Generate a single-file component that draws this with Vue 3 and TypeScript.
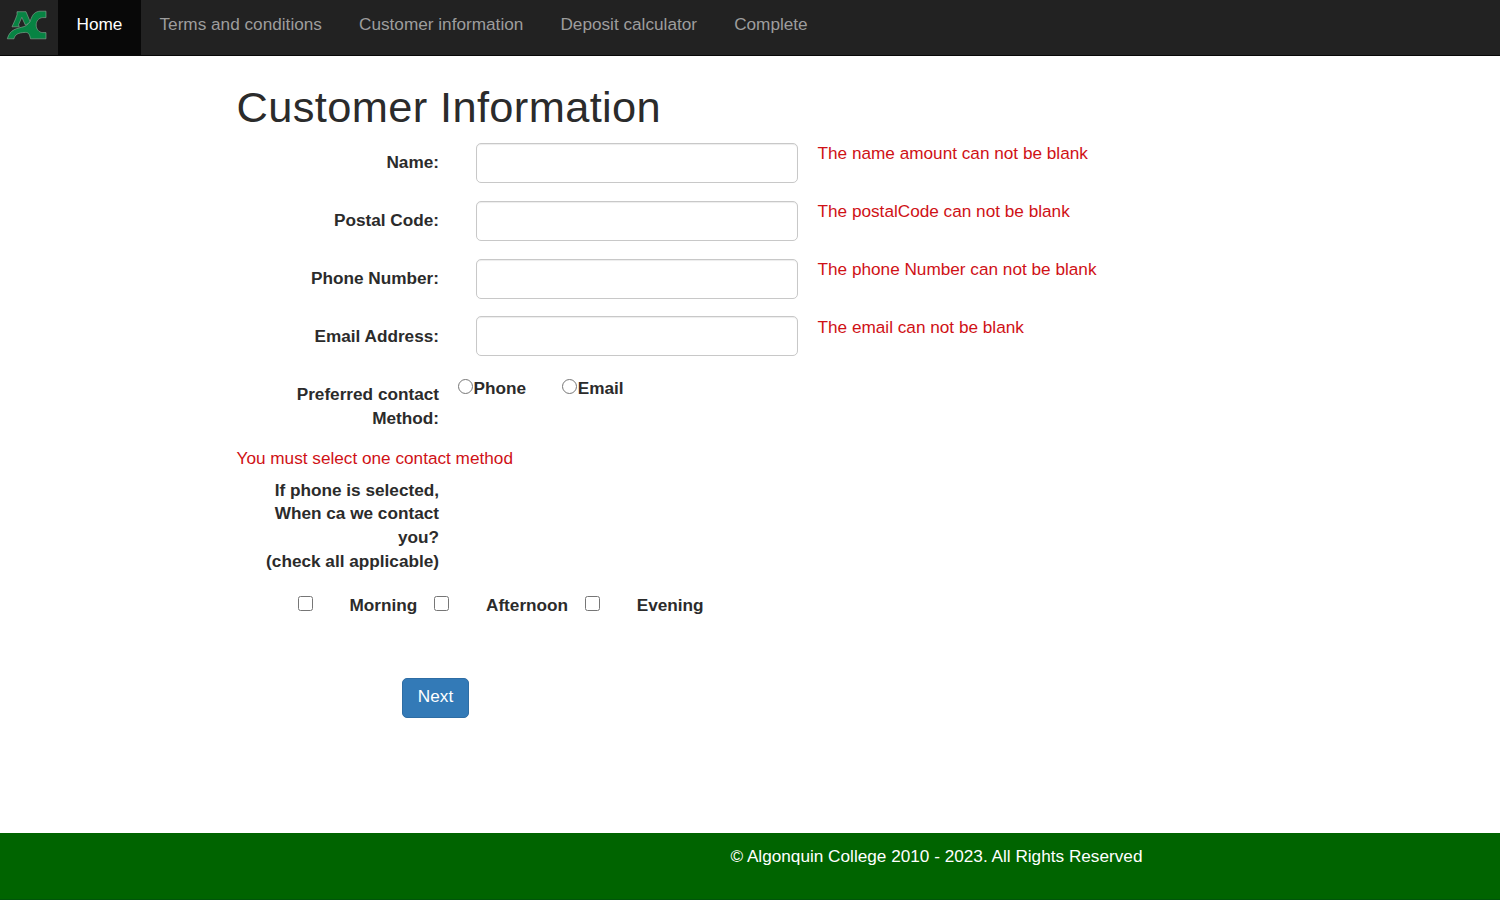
<script setup lang="ts">
import { reactive, ref } from 'vue'

interface Field {
  id: string
  label: string
  error: string
}

const navItems: string[] = ['Home', 'Terms and conditions', 'Customer information', 'Deposit calculator', 'Complete']
const active = ref('Home')

const fields: Field[] = [
  { id: 'name', label: 'Name:', error: 'The name amount can not be blank' },
  { id: 'postalCode', label: 'Postal Code:', error: 'The postalCode can not be blank' },
  { id: 'phoneNumber', label: 'Phone Number:', error: 'The phone Number can not be blank' },
  { id: 'email', label: 'Email Address:', error: 'The email can not be blank' },
]
const values = reactive<Record<string, string>>({ name: '', postalCode: '', phoneNumber: '', email: '' })
const contact = ref('')
const times = ref<string[]>([])
</script>

<template>
  <div class="page">
    <nav class="navbar">
      <a class="brand" href="#">
        <svg width="42" height="32" viewBox="0 0 42 32" aria-label="AC">
          <g fill="#078343" stroke="#8fa898" stroke-width="0.6" stroke-linejoin="round">
            <path d="M40 1.2 H34 C29.5 1.5 26.8 4 25.2 8.5 C23.8 12.5 21.5 15.4 18 16.6 C11 18.6 4 19 1.3 28.8 H8 C9 24.3 12 22.8 19.4 22.4 C22.5 22.4 23.5 24 24.5 28.8 H40 V22.6 H36.8 C32.6 22.4 30.2 19 30.2 15 C30.2 11 32.6 7.8 36.8 7.6 H40 Z" />
            <path d="M6 16.8 L9.5 9 L11 4.8 V1.7 H20 L24 11.3 C22.8 13.3 21.5 14.6 19.3 15 L15.8 7.3 L12.6 14.6 L13.2 16.8 Z" />
          </g>
        </svg>
      </a>
      <a
        v-for="item in navItems"
        :key="item"
        href="#"
        class="nav-link"
        :class="{ active: item === active }"
        @click.prevent="active = item"
      >{{ item }}</a>
    </nav>

    <main class="content">
      <h1>Customer Information</h1>
      <form @submit.prevent>
        <div v-for="field in fields" :key="field.id" class="row">
          <label class="label" :for="field.id">{{ field.label }}</label>
          <input :id="field.id" v-model="values[field.id]" class="control" type="text" />
          <span class="error">{{ field.error }}</span>
        </div>

        <div class="contact-row">
          <span class="label">Preferred contact Method:</span>
          <div class="radios">
            <label class="radio"><input v-model="contact" type="radio" value="phone" />Phone</label>
            <label class="radio"><input v-model="contact" type="radio" value="email" />Email</label>
          </div>
        </div>
        <div class="error contact-error">You must select one contact method</div>

        <div class="label time-label">If phone is selected,<br />When ca we contact<br />you?<br />(check all applicable)</div>
        <div class="times">
          <label v-for="t in ['Morning', 'Afternoon', 'Evening']" :key="t" class="time">
            <input v-model="times" type="checkbox" :value="t" />{{ t }}
          </label>
        </div>
        <button class="next" type="submit">Next</button>
      </form>
    </main>

    <footer class="footer">© Algonquin College 2010 - 2023. All Rights Reserved</footer>
  </div>
</template>

<style>
body {
  margin: 0;
  background: #fff;
}
</style>

<style scoped>
.page {
  display: flex;
  flex-direction: column;
  height: 900px;
  overflow: hidden;
  font-family: "Liberation Sans", Arial, sans-serif;
  font-size: 17.2px;
  line-height: 23.7px;
  color: #2b2b2b;
}
.page * {
  box-sizing: border-box;
}
.navbar {
  display: flex;
  flex: none;
  height: 56px;
  background: #222;
  border-bottom: 1px solid #080808;
}
.brand {
  width: 58px;
  padding: 10px 0 0 6px;
}
.brand svg {
  display: block;
}
.nav-link {
  padding: 12.5px 18.55px 0;
  color: #9d9d9d;
  text-decoration: none;
  white-space: nowrap;
}
.nav-link.active {
  color: #fff;
  background: #080808;
}
.content {
  flex: 1;
  padding: 27px 0 0 236.5px;
}
h1 {
  margin: 0 0 10.8px;
  font-size: 43.4px;
  font-weight: 400;
  line-height: 49px;
  letter-spacing: 0.37px;
  white-space: nowrap;
}
.row {
  display: grid;
  grid-template-columns: 202.5px 322px 1fr;
  height: 57.9px;
}
.label {
  padding-top: 8.1px;
  font-weight: 700;
  text-align: right;
  white-space: nowrap;
}
.control {
  width: 322px;
  height: 40px;
  margin-left: 37px;
  padding: 7px 14px;
  font: inherit;
  color: #555;
  background: #fff;
  border: 1px solid #c8c8c8;
  border-radius: 5px;
  box-shadow: inset 0 1px 1px rgba(0, 0, 0, 0.075);
}
.error {
  color: #cf1116;
  white-space: nowrap;
}
.row .error {
  margin: -0.7px 0 0 56.5px;
}
.contact-row {
  display: flex;
  height: 72.5px;
}
.contact-row .label {
  width: 202.5px;
  padding-top: 8.5px;
  white-space: normal;
}
.radios {
  display: flex;
  gap: 35.7px;
  padding: 2.2px 0 0 18.5px;
}
.radio {
  display: flex;
  height: 24px;
  font-weight: 700;
}
.radio input {
  width: 15px;
  height: 15px;
  margin: 2.5px 1px 0 0;
}
.time-label {
  width: 202.5px;
  padding-top: 0;
  margin-top: 8.1px;
}
.times {
  display: flex;
  gap: 16.7px;
  margin: 20.6px 0 0 61px;
}
.time {
  display: flex;
  font-weight: 700;
}
.time input {
  width: 15px;
  height: 15px;
  margin: 2px 37px 0 0;
}
.next {
  display: block;
  width: 67px;
  height: 40px;
  margin: 60.2px 0 0 165.5px;
  padding: 0 0 3px;
  font: inherit;
  color: #fff;
  background: #337ab7;
  border: 1px solid #2e6da4;
  border-radius: 5px;
}
.footer {
  flex: none;
  height: 67px;
  padding: 11.5px 0 0 730.4px;
  color: #fff;
  background: #006400;
  border-bottom: 1px solid #00540a;
  white-space: nowrap;
}
</style>
